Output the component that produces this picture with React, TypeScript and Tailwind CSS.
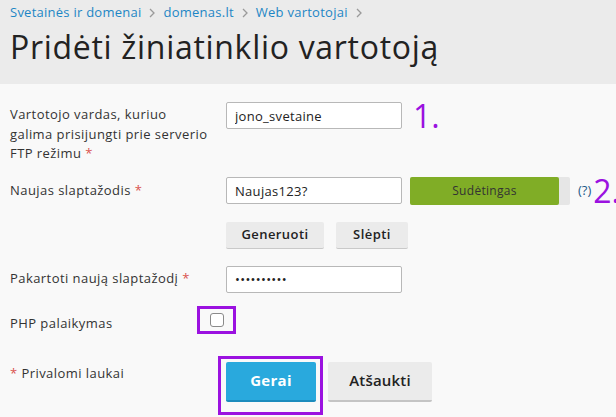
import React from 'react';

const Star = () => <span className="text-[#d9534f]">*</span>;

const Chevron = () => (
  <svg width="6" height="10" viewBox="0 0 6 10" className="mx-[8px] shrink-0">
    <path d="M1 1l4 4-4 4" fill="none" stroke="#9a9a9a" strokeWidth="1.3" />
  </svg>
);

const inputCls =
  'h-[27px] w-[176px] shrink-0 rounded-[2px] border border-[#b8b8b8] bg-white px-[8px] text-[13px] tracking-[0.3px] text-[#222] outline-none';

const App: React.FC = () => {
  return (
    <div className="min-h-[417px] w-[616px] overflow-hidden bg-[#f9f9f9] font-['Open_Sans',sans-serif] text-[13px] tracking-[0.44px] text-[#333]">
      {/* Header */}
      <div className="h-[84px] bg-[#ebebeb] px-[10px] pt-[3px]">
        <div className="flex items-center text-[13px] leading-[19px] tracking-[0.25px] text-[#1d86c5]">
          <span>Svetainės ir domenai</span>
          <Chevron />
          <span>domenas.lt</span>
          <Chevron />
          <span>Web vartotojai</span>
          <Chevron />
        </div>
        <h1 className="mt-[5px] whitespace-nowrap text-[32px] leading-[40px] tracking-[0.7px] text-[#222]">
          Pridėti žiniatinklio vartotoją
        </h1>
      </div>

      {/* Form */}
      <div className="flex flex-col px-[10px] pt-[18px]">
        <div className="flex items-start">
          <label className="w-[216px] shrink-0 pt-[3px] leading-[19.5px]">
            Vartotojo vardas, kuriuo
            <br />
            galima prisijungti prie serverio
            <br />
            FTP režimu <Star />
          </label>
          <input defaultValue="jono_svetaine" className={inputCls} />
          <span className="ml-[11px] shrink-0 text-[32px] leading-[27px] tracking-normal text-[#9b12e0]">1.</span>
        </div>

        <div className="mt-[13px] flex items-center whitespace-nowrap">
          <label className="w-[216px] shrink-0">
            Naujas slaptažodis <Star />
          </label>
          <input defaultValue="Naujas123?" className={inputCls} />
          <div className="ml-[8px] flex h-[28px] w-[160px] shrink-0 rounded-[2px] bg-[#e6e6e6]">
            <div className="flex w-[149px] items-center justify-center rounded-[2px] bg-[#80ad26] text-[12px] tracking-[0.3px] text-[#333]">
              Sudėtingas
            </div>
          </div>
          <span className="ml-[8px] shrink-0 text-[13px] tracking-normal text-[#1d5a8a]">(?)</span>
          <span className="ml-[2px] shrink-0 text-[32px] leading-[27px] tracking-normal text-[#9b12e0]">2.</span>
        </div>

        <div className="mt-[17px] flex gap-[12px] pl-[216px]">
          <button className="h-[27px] w-[98px] rounded-[2px] border-b border-[#c9c9c9] bg-[#ebebeb] text-[13px] font-semibold text-[#222]">
            Generuoti
          </button>
          <button className="h-[27px] w-[72px] rounded-[2px] border-b border-[#c9c9c9] bg-[#ebebeb] text-[13px] font-semibold text-[#222]">
            Slėpti
          </button>
        </div>

        <div className="mt-[17px] flex items-center">
          <label className="w-[216px] shrink-0">
            Pakartoti naują slaptažodį <Star />
          </label>
          <input type="password" defaultValue="1234567890" className={inputCls} />
        </div>

        <div className="mt-[13px] flex items-start">
          <label className="w-[187px] shrink-0 pt-[8px]">PHP palaikymas</label>
          <div className="border-[3px] border-[#9b12e0] pb-[4px] pl-[10px] pr-[9px] pt-[4px]">
            <input
              type="checkbox"
              className="block h-[14px] w-[14px] appearance-none rounded-[3px] border border-[#8a8a8a] bg-white"
            />
          </div>
        </div>

        <div className="mt-[22px] flex items-start">
          <div className="w-[208px] shrink-0 pt-[8px]">
            <Star /> Privalomi laukai
          </div>
          <div className="border-[3px] border-[#9b12e0] pb-[10px] pl-[5px] pr-[4px] pt-[3px]">
            <button className="h-[40px] w-[90px] rounded-[2px] border-b-2 border-[#1c8cbd] bg-[#29a9dd] text-[15px] font-bold tracking-[0.3px] text-white">
              Gerai
            </button>
          </div>
          <button className="ml-[5px] mt-[6px] h-[40px] w-[104px] rounded-[2px] border-b-2 border-[#c4c4c4] bg-[#ebebeb] text-[15px] font-semibold tracking-[0.2px] text-[#222]">
            Atšaukti
          </button>
        </div>
      </div>
    </div>
  );
};

export default App;
